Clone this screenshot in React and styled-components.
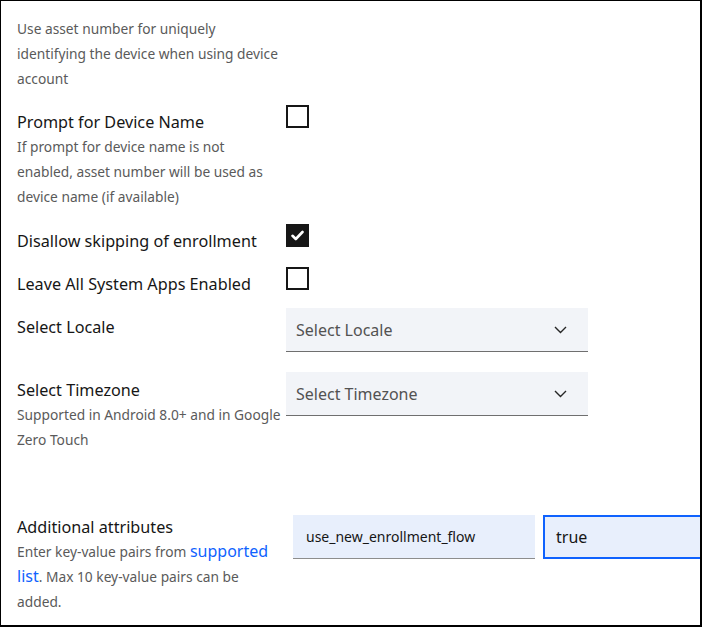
import React from "react";
import styled, { createGlobalStyle } from "styled-components";

const GlobalStyle = createGlobalStyle`
  html, body {
    margin: 0;
    padding: 0;
    background: #ffffff;
  }
  body {
    font-family: "Noto Sans", "Open Sans", Arial, sans-serif;
    -webkit-font-smoothing: antialiased;
  }
`;

const Frame = styled.div`
  box-sizing: border-box;
  width: 702px;
  height: 627px;
  border-style: solid;
  border-color: #000;
  border-width: 1px 2px 2px 1px;
  overflow: hidden;
  padding: 15px 0 0 16px;
  display: flex;
  flex-direction: column;
`;

const Row = styled.div`
  display: grid;
  grid-template-columns: ${(p) => p.$labelWidth || 269}px 1fr;
  align-items: start;
  margin-top: ${(p) => p.$top || 0}px;
`;

const LabelCol = styled.div`
  padding-top: ${(p) => p.$offset || 0}px;
`;

const Label = styled.div`
  font-size: 16.2px;
  line-height: 24px;
  color: #161616;
  white-space: nowrap;
`;

const Help = styled.div`
  font-size: 13.75px;
  line-height: 25px;
  color: #5a5a5a;
  white-space: nowrap;
`;

const HelpLink = styled.a`
  color: #0f62fe;
  font-size: 16px;
  text-decoration: none;
`;

const Box = styled.span`
  box-sizing: border-box;
  display: flex;
  align-items: center;
  justify-content: center;
  width: 23px;
  height: 23px;
  border: 2px solid #161616;
  background: ${(p) => (p.$checked ? "#161616" : "#fff")};
`;

const SelectBox = styled.div`
  box-sizing: border-box;
  width: 302px;
  height: 44px;
  background: #f2f4f8;
  border-bottom: 1px solid #6f6f6f;
  display: flex;
  align-items: center;
  justify-content: space-between;
  padding: 0 21px 0 10px;
  font-size: 16px;
  color: #525252;
`;

const Pair = styled.div`
  display: flex;
  gap: 8px;
`;

const Field = styled.div`
  box-sizing: border-box;
  height: 44px;
  width: ${(p) => p.$width}px;
  flex-shrink: 0;
  background: #e8effc;
  display: flex;
  align-items: center;
  color: #161616;
  ${(p) =>
    p.$focused
      ? `border: 2px solid #0f62fe; padding-left: 11px; font-size: 16px;`
      : `border-bottom: 1px solid #8d8d8d; padding-left: 13px; font-size: 14px;`}
`;

const Checkbox = ({ checked }) => (
  <Box $checked={checked}>
    {checked && (
      <svg width="13" height="11" viewBox="0 0 13 11">
        <path
          d="M1.5 5.8 L4.8 9 L11.5 2"
          fill="none"
          stroke="#fff"
          strokeWidth="2.6"
          strokeLinecap="round"
          strokeLinejoin="round"
        />
      </svg>
    )}
  </Box>
);

const Select = ({ placeholder }) => (
  <SelectBox>
    <span>{placeholder}</span>
    <svg width="13" height="8" viewBox="0 0 13 8">
      <path d="M1 1 L6.5 6.5 L12 1" fill="none" stroke="#262626" strokeWidth="1.4" />
    </svg>
  </SelectBox>
);

export default function App() {
  return (
    <>
      <GlobalStyle />
      <Frame>
        <Help>
          Use asset number for uniquely
          <br />
          identifying the device when using device
          <br />
          account
        </Help>

        <Row $top={14}>
          <LabelCol $offset={5}>
            <Label>Prompt for Device Name</Label>
            <Help>
              If prompt for device name is not
              <br />
              enabled, asset number will be used as
              <br />
              device name (if available)
            </Help>
          </LabelCol>
          <Checkbox />
        </Row>

        <Row $top={15}>
          <LabelCol $offset={5}>
            <Label>Disallow skipping of enrollment</Label>
          </LabelCol>
          <Checkbox checked />
        </Row>

        <Row $top={14}>
          <LabelCol $offset={5}>
            <Label>Leave All System Apps Enabled</Label>
          </LabelCol>
          <Checkbox />
        </Row>

        <Row $top={12}>
          <LabelCol $offset={7}>
            <Label>Select Locale</Label>
          </LabelCol>
          <Select placeholder="Select Locale" />
        </Row>

        <Row $top={20}>
          <LabelCol $offset={6}>
            <Label>Select Timezone</Label>
            <Help>
              Supported in Android 8.0+ and in Google
              <br />
              Zero Touch
            </Help>
          </LabelCol>
          <Select placeholder="Select Timezone" />
        </Row>

        <Row $top={63} $labelWidth={276}>
          <LabelCol>
            <Label>Additional attributes</Label>
            <Help>
              Enter key-value pairs from <HelpLink href="#">supported</HelpLink>
              <br />
              <HelpLink href="#">list</HelpLink>. Max 10 key-value pairs can be
              <br />
              added.
            </Help>
          </LabelCol>
          <Pair>
            <Field $width={242}>use_new_enrollment_flow</Field>
            <Field $width={170} $focused>
              true
            </Field>
          </Pair>
        </Row>
      </Frame>
    </>
  );
}
